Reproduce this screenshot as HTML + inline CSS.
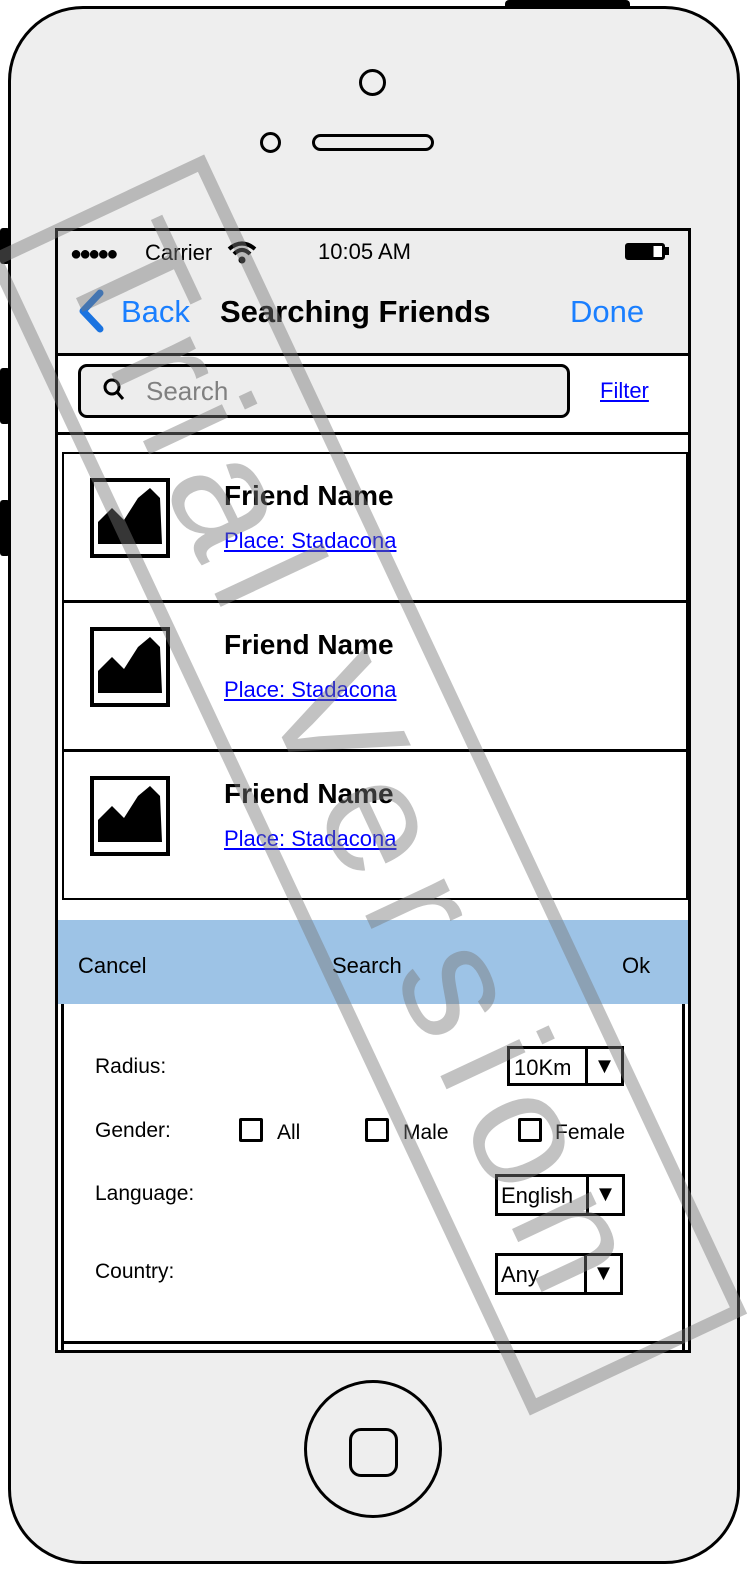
<!DOCTYPE html>
<html><head><meta charset="utf-8"><style>
*{margin:0;padding:0;box-sizing:border-box}
body{width:750px;height:1590px;background:#fff;position:relative;overflow:hidden;font-family:"Liberation Sans",sans-serif}
.a{position:absolute}
.phone{left:8px;top:6px;width:732px;height:1558px;border:3px solid #000;border-radius:75px;background:#eeeeee}
.screen{left:55px;top:228px;width:636px;height:1125px;border:3px solid #000;background:#fff;overflow:hidden}
.row{left:4px;width:626px;height:150px;border:2px solid #000;background:#fff}
.img{left:26px;top:24px;width:80px;height:80px;border:4px solid #000;background:#fff}
.nm{left:160px;top:26px;font-size:28px;font-weight:bold}
.pl{left:160px;top:74px;font-size:22px;color:#00f;text-decoration:underline}
.lbl{font-size:21px;color:#000}
.dd{border:3px solid #000;background:#fff;height:40px;font-size:22px;padding:6px 0 0 4px}
.dd i{position:absolute;right:0;top:0;width:36px;height:100%;border-left:3px solid #000;font-style:normal;text-align:center;font-size:22px;line-height:34px}
.cb{width:24px;height:24px;border:3px solid #000;border-radius:2px}
</style></head><body>
<div class="a" style="left:505px;top:0;width:125px;height:10px;background:#000;border-radius:4px"></div>
<div class="a" style="left:0;top:228px;width:10px;height:36px;background:#000;border-radius:3px"></div>
<div class="a" style="left:0;top:368px;width:10px;height:56px;background:#000;border-radius:3px"></div>
<div class="a" style="left:0;top:500px;width:10px;height:56px;background:#000;border-radius:3px"></div>
<div class="a phone"></div>
<div class="a" style="left:359px;top:69px;width:27px;height:27px;border:3px solid #000;border-radius:50%"></div>
<div class="a" style="left:260px;top:132px;width:21px;height:21px;border:3px solid #000;border-radius:50%"></div>
<div class="a" style="left:312px;top:134px;width:122px;height:17px;border:3px solid #000;border-radius:9px"></div>
<div class="a" style="left:304px;top:1380px;width:138px;height:138px;border:3px solid #000;border-radius:50%"></div>
<div class="a" style="left:349px;top:1428px;width:49px;height:49px;border:3px solid #000;border-radius:12px"></div>

<div class="a screen">
  <div class="a" style="left:0;top:0;width:630px;height:122px;background:#ededed"></div>
  <div class="a" style="left:12px;top:12px;font-size:20px;letter-spacing:-3px">●●●●●</div>
  <div class="a" style="left:87px;top:9px;font-size:22px">Carrier</div>
  <svg class="a" style="left:168px;top:8px" width="32" height="26" viewBox="0 0 32 26"><path d="M3 10 Q16 -1 29 10" stroke="#000" stroke-width="4" fill="none"/><path d="M8 15 Q16 7 24 15" stroke="#000" stroke-width="4" fill="none"/><circle cx="16" cy="21" r="3.5"/></svg>
  <div class="a" style="left:260px;top:8px;font-size:22px">10:05 AM</div>
  <div class="a" style="left:567px;top:12px;width:40px;height:17px;border:3px solid #000;border-radius:3px;background:linear-gradient(90deg,#000 75%,#fff 75%)"></div>
  <div class="a" style="left:607px;top:16px;width:4px;height:8px;background:#000"></div>
  <svg class="a" style="left:18px;top:58px" width="30" height="44" viewBox="0 0 30 44"><path d="M24 4 L7 22 L24 40" stroke="#1a73e0" stroke-width="7" fill="none" stroke-linecap="round" stroke-linejoin="round"/></svg>
  <div class="a" style="left:63px;top:63px;font-size:31px;color:#1a7fff">Back</div>
  <div class="a" style="left:162px;top:63px;font-size:31px;font-weight:bold">Searching Friends</div>
  <div class="a" style="left:512px;top:63px;font-size:31px;color:#1a7fff">Done</div>
  <div class="a" style="left:0;top:122px;width:630px;height:3px;background:#000"></div>
  <div class="a" style="left:20px;top:133px;width:492px;height:54px;border:3px solid #000;border-radius:9px;background:#ededed"></div>
  <svg class="a" style="left:44px;top:146px" width="26" height="26" viewBox="0 0 26 26"><circle cx="10" cy="10" r="7" stroke="#000" stroke-width="3" fill="none"/><path d="M15 15 L21 22" stroke="#000" stroke-width="3"/></svg>
  <div class="a" style="left:88px;top:145px;font-size:26px;color:#808080">Search</div>
  <div class="a" style="left:542px;top:147px;font-size:22px;color:#00f;text-decoration:underline">Filter</div>
  <div class="a" style="left:0;top:201px;width:630px;height:3px;background:#000"></div>

  <div class="a row" style="top:221px"><div class="a img"><svg width="72" height="72" viewBox="0 0 72 72"><path d="M4 62 L4 40 L18 26 L30 38 L44 16 L56 6 L66 16 L68 62 Z" fill="#000"/></svg></div><div class="a nm">Friend Name</div><div class="a pl">Place: Stadacona</div></div>
  <div class="a row" style="top:370px"><div class="a img"><svg width="72" height="72" viewBox="0 0 72 72"><path d="M4 62 L4 40 L18 26 L30 38 L44 16 L56 6 L66 16 L68 62 Z" fill="#000"/></svg></div><div class="a nm">Friend Name</div><div class="a pl">Place: Stadacona</div></div>
  <div class="a row" style="top:519px"><div class="a img"><svg width="72" height="72" viewBox="0 0 72 72"><path d="M4 62 L4 40 L18 26 L30 38 L44 16 L56 6 L66 16 L68 62 Z" fill="#000"/></svg></div><div class="a nm">Friend Name</div><div class="a pl">Place: Stadacona</div></div>

  <div class="a" style="left:0;top:689px;width:630px;height:84px;background:#9dc3e6"></div>
  <div class="a" style="left:20px;top:722px;font-size:22px">Cancel</div>
  <div class="a" style="left:274px;top:722px;font-size:22px">Search</div>
  <div class="a" style="left:564px;top:722px;font-size:22px">Ok</div>
  <div class="a" style="left:3px;top:773px;width:3px;height:346px;background:#000"></div>
  <div class="a" style="left:624px;top:773px;width:3px;height:346px;background:#000"></div>
  <div class="a" style="left:3px;top:1110px;width:624px;height:3px;background:#000"></div>

  <div class="a lbl" style="left:37px;top:824px">Radius:</div>
  <div class="a dd" style="left:449px;top:815px;width:117px">10Km<i>▼</i></div>
  <div class="a lbl" style="left:37px;top:888px">Gender:</div>
  <div class="a cb" style="left:181px;top:887px"></div><div class="a lbl" style="left:219px;top:890px">All</div>
  <div class="a cb" style="left:307px;top:887px"></div><div class="a lbl" style="left:345px;top:890px">Male</div>
  <div class="a cb" style="left:460px;top:887px"></div><div class="a lbl" style="left:497px;top:890px">Female</div>
  <div class="a lbl" style="left:37px;top:951px">Language:</div>
  <div class="a dd" style="left:437px;top:943px;width:130px;height:42px;padding-left:3px">English<i>▼</i></div>
  <div class="a lbl" style="left:37px;top:1029px">Country:</div>
  <div class="a dd" style="left:437px;top:1022px;width:128px;height:42px;padding-left:3px">Any<i>▼</i></div>
</div>

<div class="a" style="left:-273px;top:665px;width:1280px;height:240px;transform:rotate(64.9deg);border:13px solid rgba(120,120,120,0.45)">
  <div style="position:absolute;left:20px;top:22px;width:1240px;font-size:165px;line-height:170px;color:rgba(120,120,120,0.45);white-space:nowrap;letter-spacing:20px">Trial Version</div>
</div>
</body></html>
